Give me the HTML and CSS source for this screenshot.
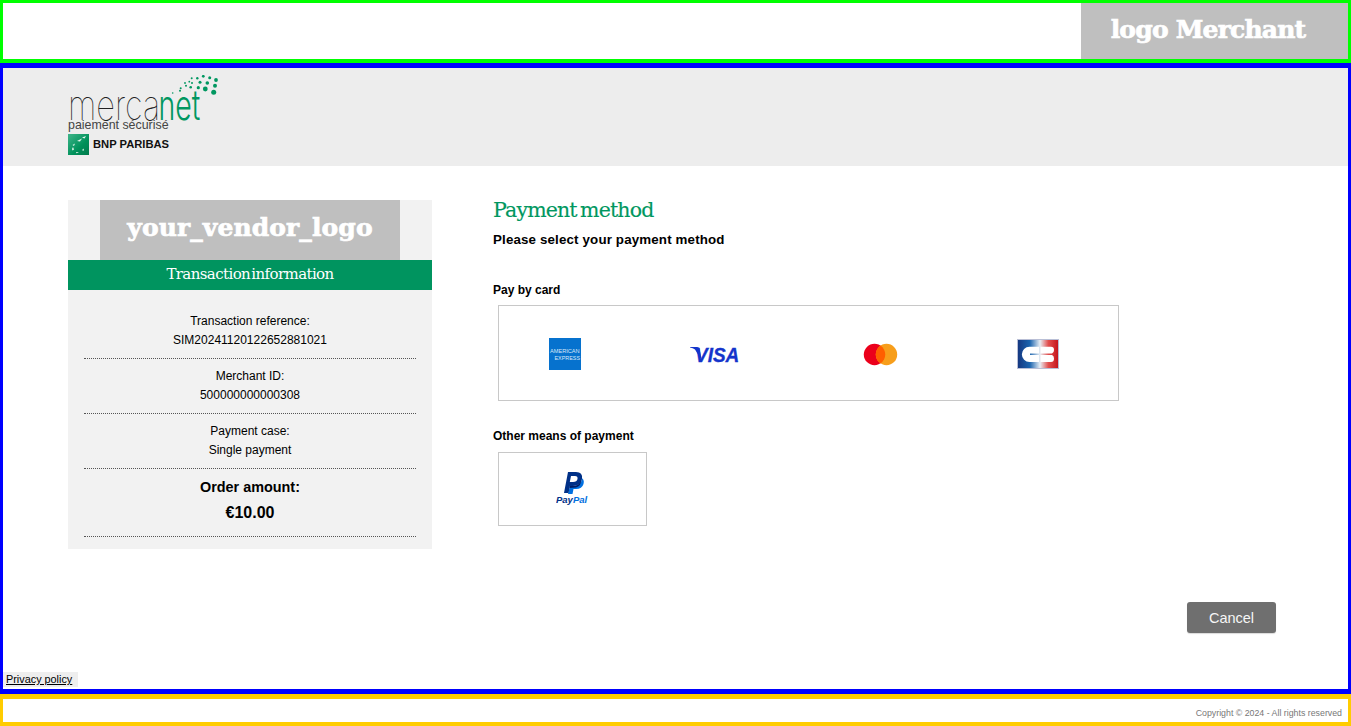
FILE: index.html
```html
<!DOCTYPE html>
<html lang="en">
<head>
<meta charset="utf-8">
<title>Payment method</title>
<link rel="stylesheet" href="styles.css">
</head>
<body>
<header class="merchant-bar">
  <div class="merchant-logo">logo Merchant</div>
</header>
<main class="main">
  <div class="brand-bar">
    <svg class="brand-logo" width="152" height="81" viewBox="0 0 152 81">
      <defs><linearGradient id="bnpg" x1="0" x2="1" y1="0" y2="1">
        <stop offset="0" stop-color="#3fb58a"/><stop offset=".6" stop-color="#00915a"/><stop offset="1" stop-color="#007a4c"/>
      </linearGradient></defs>
      <g fill="#009760">
        <circle cx="145.7" cy="17.3" r="2.5"/><circle cx="147" cy="10.7" r="2"/><circle cx="148" cy="5" r="1.9"/>
        <circle cx="137.3" cy="14" r="2.4"/><circle cx="139.3" cy="8" r="1.8"/><circle cx="141.7" cy="2.7" r="1.5"/>
        <circle cx="135.3" cy="1.3" r="1.4"/><circle cx="132" cy="7.3" r="1.5"/><circle cx="129.3" cy="3.3" r="1.2"/>
        <circle cx="130.3" cy="12.7" r="1.6"/><circle cx="123.7" cy="3.3" r="1"/><circle cx="124" cy="8" r="1"/>
        <circle cx="122.7" cy="12.3" r="1.3"/><circle cx="121.3" cy="6.7" r=".9"/><circle cx="117" cy="8" r=".9"/>
        <circle cx="118" cy="10.7" r="1"/><circle cx="112.7" cy="13.3" r="1"/><circle cx="112" cy="15.7" r="1"/>
        <circle cx="104.7" cy="18" r=".8"/>
      </g>
      <text class="mk" transform="translate(0 44.500) scale(1.090 1.4)">merca</text>
      <text class="mk mk-net" transform="translate(90.500 44.500) scale(.95 1.4)">net</text>
      <text class="mk-sub" x="0" y="54">paiement sécurisé</text>
      <rect x="0" y="59" width="21" height="21" fill="url(#bnpg)"/>
      <g fill="#e6f6ef">
        <path d="M9 66 l5-2.500 l-2 3z"/><path d="M14 62.500 l4-1.500 l-1.500 2.500z"/><path d="M4.500 70 l2.500-1.500 l-1 2.500z"/>
        <path d="M4 74 l1-2 l1 2.500 l-1.500 1z"/><path d="M8 77 l3 .2 l-2.500 1z"/><path d="M14 75 l2-1.500 l-.5 2.500z"/>
      </g>
      <text class="mk-bnp" x="25" y="73">BNP PARIBAS</text>
    </svg>
  </div>

  <div class="content">
    <aside class="panel">
      <div class="vendor-wrap"><div class="vendor-logo">your_vendor_logo</div></div>
      <h2 class="panel-title">Transaction information</h2>
      <div class="rows">
        <div class="row"><div>Transaction reference:</div><div>SIM20241120122652881021</div></div>
        <div class="row"><div>Merchant ID:</div><div>500000000000308</div></div>
        <div class="row"><div>Payment case:</div><div>Single payment</div></div>
        <div class="row row-amount"><div class="amount-label">Order amount:</div><div class="amount-value">€10.00</div></div>
      </div>
    </aside>

    <section class="methods">
      <h1 class="title">Payment method</h1>
      <p class="subtitle">Please select your payment method</p>
      <h3 class="group group-card">Pay by card</h3>
      <div class="box box-cards">
        <svg class="ic ic-amex" width="32" height="32" viewBox="0 0 32 32">
          <rect width="32" height="32" fill="#0672ce"/>
          <text class="amex-t" transform="translate(1 15.300) scale(1.250 1)">AMERICAN</text>
          <text class="amex-t" transform="translate(5.500 22) scale(1.200 1)">EXPRESS</text>
        </svg>
        <svg class="ic ic-visa" width="50" height="26" viewBox="0 -4 50 26">
          <path d="M0 2 H7 Q9 2 9.600 4 L12 16 L5 4.500 Q3 3 0 2.600Z" fill="#1434cb"/>
          <text class="visa-t" transform="translate(5 16.700) scale(1 1.095)">VISA</text>
        </svg>
        <svg class="ic ic-mc" width="35" height="23" viewBox="0 0 35 23">
          <circle cx="11.500" cy="11.500" r="10.700" fill="#eb001b"/>
          <circle cx="23.500" cy="11.500" r="10.700" fill="#f79e1b"/>
          <path d="M17.500 2.600 A10.700 10.700 0 0 1 17.500 20.400 A10.700 10.700 0 0 1 17.500 2.600Z" fill="#ff5f00"/>
        </svg>
        <svg class="ic ic-cb" width="42" height="30" viewBox="0 0 42 30">
          <defs><linearGradient id="cbg" x1="0" x2="1" y1="0" y2="0">
            <stop offset="0" stop-color="#15367f"/><stop offset=".3" stop-color="#1b64ae"/>
            <stop offset=".55" stop-color="#e8eef4"/><stop offset=".75" stop-color="#e2504f"/><stop offset="1" stop-color="#c4121a"/>
          </linearGradient></defs>
          <rect x=".5" y=".5" width="41" height="29" fill="url(#cbg)" stroke="#b9bfd6"/>
          <path d="M22 7.700 H12.500 A7.650 7.650 0 0 0 12.500 23 H22 V16 H13 V14.500 H22Z" fill="#fff"/>
          <path d="M23.500 7.700 H34 Q37 7.700 37 11 Q37 14 35 14.500 H23.500Z M23.500 16 H35 Q37 16.500 37 19.500 Q37 23 34 23 H23.500Z" fill="#fff"/>
        </svg>
      </div>
      <h3 class="group group-other">Other means of payment</h3>
      <div class="box box-paypal">
        <svg class="ic" width="34" height="36" viewBox="0 0 34 36">
          <path d="M24 6 Q29 8 27.500 13 Q26 18 20 18 H17.500 L16.500 23 H12 L12.500 21 L14 15 H17 Q25 15 26 8Z" fill="#0070e0"/>
          <path fill-rule="evenodd" d="M12 1 H20 Q27 1 26 8 Q25 15 17 15 H14 L12.500 22 H8 Z M15 5 L13.800 11 H17 Q21 11 21.500 8 Q22 5 19 5Z" fill="#003087"/>
          <path d="M14 15 H17 Q23 15 25 10 Q25 15 20 16.500 L13.500 17Z" fill="#001c64"/>
          <text class="pp-t" x="0" y="32"><tspan fill="#003087">Pay</tspan><tspan fill="#0070e0">Pal</tspan></text>
        </svg>
      </div>
    </section>
  </div>

  <div class="actions"><button class="cancel" type="button">Cancel</button></div>
  <div class="privacy-row"><a class="privacy" href="#">Privacy policy</a></div>
</main>
<footer class="footer">Copyright © 2024 - All rights reserved</footer>
</body>
</html>
```
FILE: styles.css
```css
* { box-sizing: border-box; }
html, body { margin: 0; padding: 0; }
body {
  width: 1351px;
  height: 726px;
  overflow: hidden;
  display: flex;
  flex-direction: column;
  font-family: "Liberation Sans", Arial, sans-serif;
  color: #000;
  background: #fff;
}
.merchant-bar {
  height: 63px;
  flex: none;
  border: 3px solid #00ff00;
  border-bottom-width: 4px;
  display: flex;
  justify-content: flex-end;
}
.merchant-logo {
  width: 267px;
  padding-right: 13px;
  background: #bfbfbf;
  color: #fff;
  font: 700 25px/54px "DejaVu Serif", serif;
  -webkit-text-stroke: .7px #fff;
  text-align: center;
  letter-spacing: -.8px;
}
.main {
  height: 631px;
  flex: none;
  border: 3px solid #0000ff;
  border-width: 5px 3px;
  display: flex;
  flex-direction: column;
}
.brand-bar {
  height: 98px;
  flex: none;
  background: #ededed;
  padding: 7px 0 0 65px;
}
.brand-logo { display: block; }
.mk { font-family: "Inter", sans-serif; font-weight: 100; font-size: 30px; fill: #222; }
.mk-net { fill: #009760; font-weight: 300; }
.mk-sub { font-family: "Liberation Sans", sans-serif; font-size: 12.400px; fill: #444; }
.mk-bnp { font-family: "Liberation Sans", sans-serif; font-weight: 700; font-size: 11.200px; fill: #111; }
.content {
  display: flex;
  padding: 34px 0 0 65px;
  gap: 61px;
  height: 436px;
  flex: none;
}
.panel {
  width: 364px;
  height: 349px;
  background: #f2f2f2;
}
.vendor-wrap { display: flex; justify-content: center; }
.vendor-logo {
  width: 300px;
  height: 60px;
  background: #bfbfbf;
  color: #fff;
  font: 700 25px/56px "DejaVu Serif", serif;
  -webkit-text-stroke: .7px #fff;
  text-align: center;
  letter-spacing: .1px;
}
.panel-title {
  margin: 0;
  height: 30px;
  background: #00945f;
  color: #fff;
  font: 400 15px/29px "DejaVu Serif", serif;
  text-align: center;
  letter-spacing: -.6px;
  word-spacing: -3px;
}
.rows { padding: 22px 16px 0; }
.row {
  font-size: 12px;
  line-height: 19px;
  text-align: center;
  padding-bottom: 8px;
  border-bottom: 1px dotted #555;
  margin-bottom: 8px;
}
.row-amount { padding-bottom: 8px; margin-bottom: 0; }
.amount-label { font-size: 14.400px; font-weight: 700; line-height: 20px; }
.amount-value { font-size: 16px; font-weight: 700; line-height: 31px; }
.methods { width: 640px; }
.title {
  margin: 0;
  font: 400 20.500px/20px "DejaVu Serif", serif;
  color: #009760;
  letter-spacing: -.85px;
  word-spacing: -2.300px;
  -webkit-text-stroke: .15px #009760;
}
.subtitle {
  margin: 12px 0 0;
  font-size: 13.330px;
  line-height: 16px;
  font-weight: 700;
  letter-spacing: .15px;
}
.group { margin: 0; font-size: 12px; line-height: 14px; font-weight: 700; }
.group-card { margin-top: 35px; }
.group-other { margin-top: 28px; }
.box {
  margin: 8px 0 0 5px;
  border: 1px solid #c8c8c8;
  background: #fff;
}
.ic { display: block; }
.box-cards {
  width: 621px;
  height: 96px;
  padding-top: 2px;
  display: grid;
  grid-template-columns: 82px 165px 165px 1fr;
  align-items: center;
}
.ic-amex { margin-left: 50px; }
.ic-visa { margin-left: 109px; }
.ic-mc { margin-left: 117px; }
.ic-cb { margin-left: 106px; }
.box-paypal {
  width: 149px;
  height: 74px;
  margin-top: 9px;
  display: flex;
  align-items: center;
  justify-content: center;
}
.amex-t { font: 400 4.500px "Liberation Sans", sans-serif; fill: #dbe9f8; }
.visa-t { font: italic 700 19px "Liberation Sans", sans-serif; fill: #1434cb; stroke: #1434cb; stroke-width: .3px; }
.pp-t { font: italic 700 9.500px "Liberation Sans", sans-serif; }
.actions {
  display: flex;
  justify-content: flex-end;
  padding-right: 72px;
}
.cancel {
  width: 89px;
  height: 31px;
  border: 0;
  border-radius: 3px;
  background: #6f6f6f;
  color: #f6f6f6;
  font: 14.500px "Liberation Sans", sans-serif;
  box-shadow: 0 1px 1px rgba(0,0,0,.15);
  padding: 0;
}
.privacy-row { margin-top: 39px; display: flex; }
.privacy {
  font-size: 10.850px;
  line-height: 15px;
  padding: 0 6px 0 3px;
  background: #eee;
  color: #000;
}
.footer {
  height: 32px;
  flex: none;
  border: 3px solid #ffcc00;
  border-width: 5px 3px 4px;
  font-size: 8.800px;
  line-height: 28px;
  color: #777;
  text-align: right;
  padding-right: 6px;
}
```
